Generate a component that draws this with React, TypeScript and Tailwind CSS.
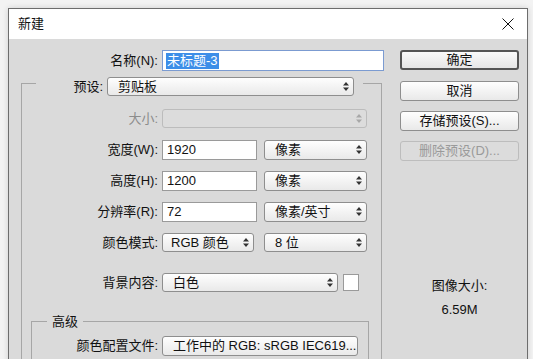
const font = "font-['Liberation_Sans','Noto_Sans_CJK_SC',sans-serif]";

function Arrows({ dim }: { dim?: boolean }) {
  return (
    <svg width="6" height="9" viewBox="0 0 6 9" className={dim ? "text-[#a8a8a8]" : "text-[#333]"}>
      <path d="M3 0L6 3.5H0Z M0 5.5H6L3 9Z" fill="currentColor" />
    </svg>
  );
}

function Select({ w, label, disabled, h = "h-[20px]", pl = "pl-[10px]" }: { w: string; label?: string; disabled?: boolean; h?: string; pl?: string }) {
  return (
    <div
      className={`${w} ${h} ${pl} pr-[4px] flex items-center justify-between rounded-[3px] border ${
        disabled ? "border-[#bcbcbc] bg-[#dcdcdc]" : "border-[#8e8e8e] bg-gradient-to-b from-[#fefefe] to-[#e9e9e9]"
      }`}
    >
      <span className="whitespace-nowrap text-[13px] leading-none text-[#111]">{label}</span>
      <Arrows dim={disabled} />
    </div>
  );
}

function Input({ w, value }: { w: string; value: string }) {
  return (
    <div className={`${w} h-[20px] pl-[4px] flex items-center border border-[#9a9a9a] bg-white text-[13px] text-[#111]`}>
      {value}
    </div>
  );
}

function Label({ w, text, dim }: { w: string; text: string; dim?: boolean }) {
  return (
    <div className={`${w} mr-[4px] text-right text-[13px] whitespace-nowrap ${dim ? "text-[#8c8c8c]" : "text-[#111]"}`}>
      {text}
    </div>
  );
}

function Button({ text, primary, disabled }: { text: string; primary?: boolean; disabled?: boolean }) {
  return (
    <div
      className={`w-[119px] h-[20px] flex items-center justify-center rounded-[3px] text-[13px] ${
        primary
          ? "border-2 border-[#555] bg-gradient-to-b from-[#fafafa] to-[#e6e6e6] text-[#111]"
          : disabled
          ? "border border-[#bdbdbd] bg-[#dcdcdc] text-[#9a9a9a]"
          : "border border-[#8e8e8e] bg-gradient-to-b from-[#fefefe] to-[#e9e9e9] text-[#111]"
      }`}
    >
      {text}
    </div>
  );
}

export default function App() {
  return (
    <div className={`w-[533px] h-[359px] overflow-hidden bg-[#f3f3f3] ${font}`}>
      <div className="ml-[8px] mt-[8px] w-[520px] h-[360px] border border-[#6d6d6d] bg-[#dadada] shadow-[0_0_6px_rgba(0,0,0,0.15)]">
        {/* title bar */}
        <div className="h-[30px] bg-white flex items-center justify-between pl-[9px] pr-[13px]">
          <span className="text-[13px] text-[#111]">新建</span>
          <svg width="12" height="12" viewBox="0 0 12 12">
            <path d="M0.5 0.5L11.5 11.5M11.5 0.5L0.5 11.5" stroke="#111" strokeWidth="1" />
          </svg>
        </div>

        {/* body */}
        <div className="flex pt-[11px]">
          <div className="w-[391px]">
            <div className="flex items-center">
              <Label w="w-[149px]" text="名称(N):" />
              <div className="w-[222px] h-[21px] pl-[3px] flex items-center border border-[#7b9bd1] bg-white">
                <span className="bg-[#3d8ee8] text-white text-[13px] leading-[16px] px-[1px]">未标题-3</span>
              </div>
            </div>

            {/* preset group */}
            <div className="ml-[12px] w-[361px] mt-[6px]">
              <div className="flex h-[19px]">
                <div className="w-[15px] mt-[6px] border-l border-t border-[#a6a6a6]" />
                <div className="flex items-center">
                  <div className="w-[67px] text-right text-[13px] text-[#111]">预设:</div>
                  <div className="ml-[4px]">
                    <Select w="w-[247px]" h="h-[19px]" label="剪贴板" />
                  </div>
                </div>
                <div className="w-[9px]" />
                <div className="flex-1 mt-[6px] border-r border-t border-[#a6a6a6]" />
              </div>

              <div className="h-[300px] border-l border-r border-[#a6a6a6] pt-[13px]">
                <div className="flex items-center">
                  <Label w="w-[136px]" text="大小:" dim />
                  <Select w="w-[205px]" h="h-[19px]" disabled />
                </div>

                <div className="flex items-center mt-[11px]">
                  <Label w="w-[136px]" text="宽度(W):" />
                  <Input w="w-[95px]" value="1920" />
                  <div className="ml-[7px]">
                    <Select w="w-[103px]" label="像素" />
                  </div>
                </div>

                <div className="flex items-center mt-[11px]">
                  <Label w="w-[136px]" text="高度(H):" />
                  <Input w="w-[95px]" value="1200" />
                  <div className="ml-[7px]">
                    <Select w="w-[103px]" label="像素" />
                  </div>
                </div>

                <div className="flex items-center mt-[11px]">
                  <Label w="w-[136px]" text="分辨率(R):" />
                  <Input w="w-[95px]" value="72" />
                  <div className="ml-[7px]">
                    <Select w="w-[103px]" label="像素/英寸" />
                  </div>
                </div>

                <div className="flex items-center mt-[11px]">
                  <Label w="w-[136px]" text="颜色模式:" />
                  <Select w="w-[92px]" h="h-[19px]" pl="pl-[8px]" label="RGB 颜色" />
                  <div className="ml-[10px]">
                    <Select w="w-[103px]" h="h-[19px]" label="8 位" />
                  </div>
                </div>

                <div className="flex items-center mt-[21px]">
                  <Label w="w-[136px]" text="背景内容:" />
                  <Select w="w-[176px]" h="h-[19px]" label="白色" />
                  <div className="ml-[5px] w-[16px] h-[17px] border border-[#9a9a9a] bg-white" />
                </div>

                {/* advanced group */}
                <div className="ml-[9px] w-[338px] mt-[21px]">
                  <div className="flex h-[15px]">
                    <div className="w-[16px] mt-[7px] border-l border-t border-[#a6a6a6]" />
                    <div className="px-[5px] text-[13px] leading-[15px] text-[#111]">高级</div>
                    <div className="flex-1 mt-[7px] border-r border-t border-[#a6a6a6]" />
                  </div>
                  <div className="h-[80px] border-l border-r border-[#a6a6a6] pt-[7px]">
                    <div className="flex items-center">
                      <Label w="w-[126px]" text="颜色配置文件:" />
                      <Select w="w-[196px]" pl="pl-[10px]" label="工作中的 RGB: sRGB IEC619..." />
                    </div>
                  </div>
                </div>
              </div>
            </div>
          </div>

          {/* buttons */}
          <div className="w-[119px] flex flex-col">
            <div className="flex flex-col gap-[10px]">
              <div className="h-[21px] flex">
                <Button text="确定" primary />
              </div>
              <Button text="取消" />
              <Button text="存储预设(S)..." />
              <Button text="删除预设(D)..." disabled />
            </div>
            <div className="mt-[117px] flex flex-col items-center text-[13px] text-[#111]">
              <div className="leading-[15px]">图像大小:</div>
              <div className="mt-[9px] leading-[15px]">6.59M</div>
            </div>
          </div>
        </div>
      </div>
    </div>
  );
}
